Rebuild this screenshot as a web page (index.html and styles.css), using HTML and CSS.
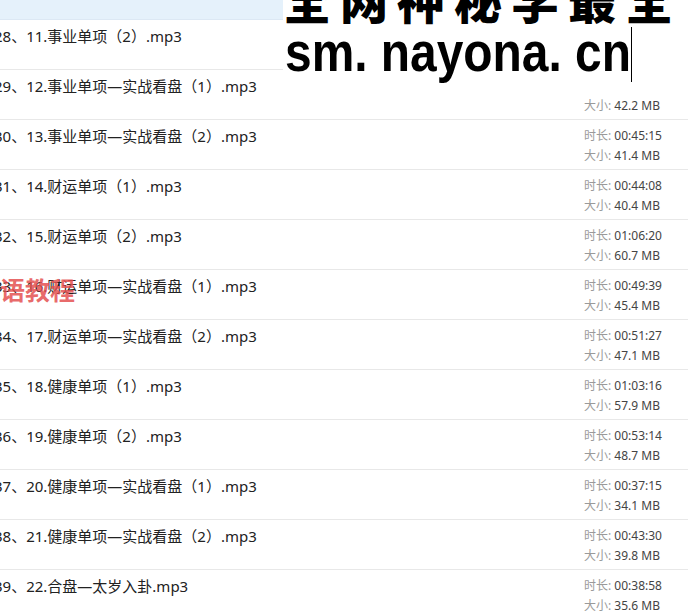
FILE: index.html
```html
<!DOCTYPE html>
<html lang="zh-CN">
<head>
  <meta charset="UTF-8">
  <title>音频列表</title>
  <link rel="stylesheet" href="styles.css">
</head>
<body>

  <div class="list">
    <div class="row row-top"></div>

    <div class="row">
      <div class="name">28、11.事业单项（2）.mp3</div>
      <div class="meta"><div><span class="lbl">时长:</span> 00:46:05</div><div><span class="lbl">大小:</span> 42.3 MB</div></div>
    </div>
    <div class="row">
      <div class="name">29、12.事业单项—实战看盘（1）.mp3</div>
      <div class="meta"><div><span class="lbl">时长:</span> 00:46:02</div><div><span class="lbl">大小:</span> 42.2 MB</div></div>
    </div>
    <div class="row">
      <div class="name">30、13.事业单项—实战看盘（2）.mp3</div>
      <div class="meta"><div><span class="lbl">时长:</span> 00:45:15</div><div><span class="lbl">大小:</span> 41.4 MB</div></div>
    </div>
    <div class="row">
      <div class="name">31、14.财运单项（1）.mp3</div>
      <div class="meta"><div><span class="lbl">时长:</span> 00:44:08</div><div><span class="lbl">大小:</span> 40.4 MB</div></div>
    </div>
    <div class="row">
      <div class="name">32、15.财运单项（2）.mp3</div>
      <div class="meta"><div><span class="lbl">时长:</span> 01:06:20</div><div><span class="lbl">大小:</span> 60.7 MB</div></div>
    </div>
    <div class="row">
      <div class="name">33、16.财运单项—实战看盘（1）.mp3</div>
      <div class="meta"><div><span class="lbl">时长:</span> 00:49:39</div><div><span class="lbl">大小:</span> 45.4 MB</div></div>
    </div>
    <div class="row">
      <div class="name">34、17.财运单项—实战看盘（2）.mp3</div>
      <div class="meta"><div><span class="lbl">时长:</span> 00:51:27</div><div><span class="lbl">大小:</span> 47.1 MB</div></div>
    </div>
    <div class="row">
      <div class="name">35、18.健康单项（1）.mp3</div>
      <div class="meta"><div><span class="lbl">时长:</span> 01:03:16</div><div><span class="lbl">大小:</span> 57.9 MB</div></div>
    </div>
    <div class="row">
      <div class="name">36、19.健康单项（2）.mp3</div>
      <div class="meta"><div><span class="lbl">时长:</span> 00:53:14</div><div><span class="lbl">大小:</span> 48.7 MB</div></div>
    </div>
    <div class="row">
      <div class="name">37、20.健康单项—实战看盘（1）.mp3</div>
      <div class="meta"><div><span class="lbl">时长:</span> 00:37:15</div><div><span class="lbl">大小:</span> 34.1 MB</div></div>
    </div>
    <div class="row">
      <div class="name">38、21.健康单项—实战看盘（2）.mp3</div>
      <div class="meta"><div><span class="lbl">时长:</span> 00:43:30</div><div><span class="lbl">大小:</span> 39.8 MB</div></div>
    </div>
    <div class="row">
      <div class="name">39、22.合盘—太岁入卦.mp3</div>
      <div class="meta"><div><span class="lbl">时长:</span> 00:38:58</div><div><span class="lbl">大小:</span> 35.6 MB</div></div>
    </div>
  </div>

  <!-- watermarks over the list -->
  <div class="stamp">
    <div class="stamp-cn">全网神秘学最全</div>
    <div class="stamp-url">sm. nayona. cn</div>
    <span class="caret"></span>
  </div>

  <div class="stamp-red">语教程</div>

</body>
</html>
```

FILE: styles.css
```css
:root {
  --line: #e8e8e8;
  --text: #222;
  --muted: #9a9a9a;
  --value: #444;
}

body {
  margin: 0;
  font-family: 'Noto Sans', 'Noto Sans CJK SC', sans-serif;
  background: white;
  color: var(--text);
  overflow: hidden;
  position: relative;
  height: 613px;
}

.list {
  display: flex;
  flex-direction: column;
}

.row {
  display: flex;
  justify-content: space-between;
  height: 49px;
  border-bottom: 1px solid var(--line);
  flex-shrink: 0;
}

.row-top {
  height: 19px;
  background: #e5f1fb;
  border-bottom-color: #dce8f4;
}

.name {
  margin-left: -6px;
  padding-top: 6px;
  font-size: 15px;
  line-height: 20px;
  white-space: nowrap;
  text-spacing-trim: space-all;
}

.meta {
  width: 104px;
  padding-top: 6px;
  font-size: 12px;
  line-height: 20px;
  color: var(--value);
  white-space: nowrap;
}

.lbl {
  color: var(--muted);
}

.stamp {
  position: absolute;
  top: 0;
  left: 283px;
  width: 405px;
  height: 95px;
  background: white;
  color: black;
  overflow: hidden;
}

.stamp-cn {
  margin-top: -27px;
  height: 50px;
  line-height: 50px;
  font-family: 'Noto Sans CJK SC', sans-serif;
  font-weight: 900;
  font-size: 48px;
  letter-spacing: 9px;
  white-space: nowrap;
}

.stamp-url {
  margin-top: 4px;
  margin-left: 2px;
  height: 50px;
  line-height: 50px;
  font-family: 'Liberation Sans', sans-serif;
  font-weight: bold;
  font-size: 56px;
  white-space: nowrap;
  transform: scaleX(0.855);
  transform-origin: left center;
}

.caret {
  position: absolute;
  left: 348px;
  top: 27px;
  width: 1px;
  height: 55px;
  background: black;
}

.stamp-red {
  position: absolute;
  left: 0;
  top: 272px;
  font-family: 'Noto Sans CJK SC', sans-serif;
  font-weight: bold;
  font-size: 25px;
  line-height: 34px;
  color: rgba(228, 80, 80, 0.85);
  white-space: nowrap;
}
```
